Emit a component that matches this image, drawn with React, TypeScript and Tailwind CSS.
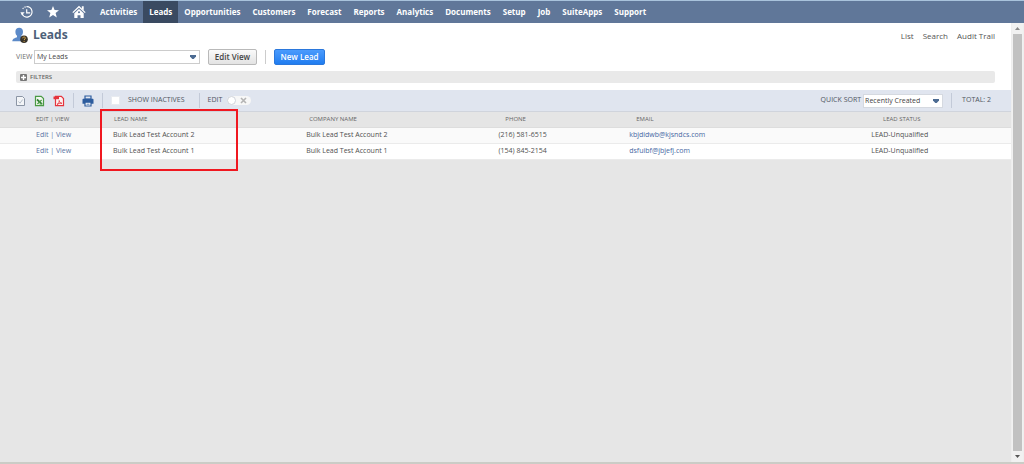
import React from 'react'

interface Lead {
  name: string
  company: string
  phone: string
  email: string
  status: string
}

const navItems = [
  'Activities',
  'Leads',
  'Opportunities',
  'Customers',
  'Forecast',
  'Reports',
  'Analytics',
  'Documents',
  'Setup',
  'Job',
  'SuiteApps',
  'Support',
]

const leads: Lead[] = [
  {
    name: 'Bulk Lead Test Account 2',
    company: 'Bulk Lead Test Account 2',
    phone: '(216) 581-6515',
    email: 'kbjdidwb@kjsndcs.com',
    status: 'LEAD-Unqualified',
  },
  {
    name: 'Bulk Lead Test Account 1',
    company: 'Bulk Lead Test Account 1',
    phone: '(154) 845-2154',
    email: 'dsfuibf@jbjefj.com',
    status: 'LEAD-Unqualified',
  },
]

const RecentIcon = () => (
  <svg viewBox="0 0 14 14" className="h-3.5 w-3.5" fill="none" stroke="currentColor" strokeWidth="1.2">
    <path d="M6.5 1.7A5.2 5.2 0 1 1 2 8.8" />
    <path d="M6.700 4.200v3.600h3.500" />
    <path d="M.4 7.200h4.200L2 10.200z" fill="currentColor" stroke="none" />
    <path d="M5.600 1.900A5.200 5.200 0 0 0 2.200 4.600" strokeDasharray="1.2 1" />
  </svg>
)

const StarIcon = () => (
  <svg viewBox="0 0 14 14" className="h-3.5 w-3.5" fill="currentColor">
    <path d="M7 1l1.600 4.100 4.400.2-3.400 2.800 1.200 4.300L7 10l-3.800 2.400 1.200-4.300L1 5.300l4.400-.2z" />
  </svg>
)

const HomeIcon = () => (
  <svg viewBox="0 0 14 14" className="h-3.5 w-3.5">
    <path d="M9.800 1.300h1.900v4L9.800 3.700z" fill="currentColor" />
    <path d="M.8 7.600L7 1.700l6.200 5.900" fill="none" stroke="currentColor" strokeWidth="1.300" />
    <path
      d="M2.300 8.200L7 3.900l4.700 4.300V13H8.500v-2.800h-3V13H2.300zM7 6.200a1 1 0 1 0 0 2 1 1 0 0 0 0-2z"
      fill="currentColor"
      fillRule="evenodd"
    />
  </svg>
)

const LeadIcon = () => (
  <svg viewBox="0 0 17 17" className="h-[17px] w-[17px]">
    <path
      d="M7.200.8c2.300 0 3.800 1.500 3.800 3.900 0 1.800-.7 3.200-1.700 4v1.500c1.700.8 4.200 1.300 4.200 4.100H.3c0-2.800 2.800-3.300 4.700-4.100V8.700C4 7.900 3.400 6.500 3.400 4.700 3.400 2.300 4.900.8 7.200.8z"
      fill="#5c8ac8"
    />
    <circle cx="12" cy="12.300" r="3.800" fill="#38332a" />
    <path d="M10.700 11.300c0-1.800 2.700-1.700 2.700-.2 0 .9-1.300.9-1.300 1.900" fill="none" stroke="#dba94a" strokeWidth="1" />
    <circle cx="12.100" cy="14.300" r=".6" fill="#dba94a" />
  </svg>
)

const FileIcon = () => (
  <svg viewBox="0 0 11 12" className="h-3 w-[11px]" fill="none" stroke="#8b95a5" strokeWidth="1">
    <path d="M1.500 1.500h6l2 2v7h-8z" fill="#f3f5f8" />
    <path d="M3.500 6.500l1.500 1.700 2.700-3.700" stroke="#b4bdc9" />
  </svg>
)

const ExcelIcon = () => (
  <svg viewBox="0 0 11 12" className="h-3 w-[11px]" fill="none" stroke="#4a9a45" strokeWidth="1.200">
    <path d="M1.500 1.300h5.700l2.300 2.200v7.200h-8z" fill="#f0f7ee" />
    <path d="M3 4.500l4.800 4.300" stroke="#2f7d33" strokeWidth="1.700" />
    <path d="M7.600 5L3.400 9M5.500 9h3" />
  </svg>
)

const PdfIcon = () => (
  <svg viewBox="0 0 12 12" className="h-3 w-3" fill="none" stroke="#e5343d" strokeWidth="1.200">
    <path d="M2.500 4V1.300h5.800l2.200 2.200v7.200h-8V4" fill="#fdf1f1" />
    <path d="M.5 1.500H6v2.700H.5z" fill="#e5343d" stroke="none" />
    <path d="M4 9.500c1.800-1 2.300-2.500 2.200-4 .3 1.800 1 2.600 2.800 2.800-2-.2-3.500.2-5 1.200z" strokeWidth=".9" />
  </svg>
)

const PrintIcon = () => (
  <svg viewBox="0 0 12 12" className="h-3 w-3">
    <path d="M3 1h6v3H3z" fill="#e2e7f1" stroke="#2d5c9e" strokeWidth="1.200" />
    <path d="M1.500 3.700h9c.6 0 1 .4 1 1v4H.5v-4c0-.6.4-1 1-1z" fill="#2d5c9e" />
    <path d="M3 7.200h6V11H3z" fill="#fff" stroke="#2d5c9e" strokeWidth="1.200" />
    <path d="M4.500 9.200h3" stroke="#2d5c9e" strokeWidth=".8" />
  </svg>
)

const Caret = () => (
  <svg viewBox="0 0 8 6" className="pointer-events-none absolute right-[3px] h-1.5 w-2">
    <path d="M1 1h6v1.500L4.700 5H3.300L1 2.500z" fill="#4c6b92" />
  </svg>
)

const Divider = ({ className = '' }: { className?: string }) => (
  <span className={`h-[15px] w-px bg-[#c3cad8] ${className}`} />
)

const NavBar = () => (
  <nav className="flex h-[23px] shrink-0 items-stretch border-t border-[#a9c3dc] bg-[#607799] pl-5 text-white">
    <div className="mr-2 flex items-center gap-3">
      <button aria-label="Recent records"><RecentIcon /></button>
      <button aria-label="Shortcuts"><StarIcon /></button>
      <button aria-label="Home"><HomeIcon /></button>
    </div>
    {navItems.map((item) => (
      <a
        key={item}
        href="#"
        className={`flex items-center px-1.5 text-[8px] font-bold ${item === 'Leads' ? 'bg-[#3a4a61]' : ''}`}
      >
        {item}
      </a>
    ))}
  </nav>
)

const PageHeader = () => (
  <header className="h-[67px] shrink-0 bg-white">
    <div className="flex h-[25px] items-center justify-between pr-4 pl-3">
      <div className="flex items-center gap-1">
        <LeadIcon />
        <h1 className="pb-0.5 text-[12px] leading-4 font-bold text-[#4d5f79]">Leads</h1>
      </div>
      <div className="flex gap-[9px] text-[8px] text-[#545454]">
        <a href="#">List</a>
        <a href="#">Search</a>
        <a href="#">Audit Trail</a>
      </div>
    </div>

    <div className="flex h-[18px] items-center pl-4">
      <label htmlFor="view" className="w-[18px] text-[7px] text-[#6f6f6f]">VIEW</label>
      <div className="relative flex w-[166px] items-center">
        <select
          id="view"
          className="h-3.5 w-full appearance-none border border-[#ccc] bg-white px-0.5 text-[7px] leading-3 text-[#444]"
        >
          <option>My Leads</option>
        </select>
        <Caret />
      </div>
      <button className="ml-2 h-4 w-[49px] rounded-xs border border-[#b9b9b9] bg-linear-to-b from-[#fafafa] to-[#e3e3e3] text-[8px] leading-3 font-semibold text-[#444]">
        Edit View
      </button>
      <span className="mx-2 h-3.5 w-px bg-[#ccc]" />
      <button className="h-4 w-[51px] rounded-xs border border-[#2b78dc] bg-linear-to-b from-[#4a9bfd] to-[#1f7df0] text-[8px] leading-3 font-semibold text-white">
        New Lead
      </button>
    </div>

    <button className="mt-[5px] mr-4 ml-4 flex h-3 w-[calc(100%-32px)] items-center gap-[3px] rounded-xs bg-[#e9e9e9] pl-1 text-[6px] font-semibold text-[#666]">
      <svg viewBox="0 0 7 7" className="h-[7px] w-[7px]">
        <rect width="7" height="7" rx="1" fill="#777" />
        <path d="M3.500 1v5M1 3.500h5" stroke="#fff" strokeWidth="1.400" />
      </svg>
      FILTERS
    </button>
  </header>
)

const Toolbar = () => (
  <div className="flex h-[22px] shrink-0 items-center border-b border-[#d0d4dc] bg-[#e0e5ef] pr-5 pl-[15px] text-[7px] text-[#4f5661]">
    <div className="flex items-center gap-2">
      <button aria-label="Export CSV"><FileIcon /></button>
      <button aria-label="Export Excel"><ExcelIcon /></button>
      <button aria-label="Export PDF"><PdfIcon /></button>
    </div>
    <Divider className="mx-2" />
    <button aria-label="Print"><PrintIcon /></button>
    <Divider className="mx-2" />
    <label className="flex items-center gap-2">
      <input type="checkbox" className="h-[9px] w-[9px] appearance-none border border-[#e8ebf0] bg-white" />
      SHOW INACTIVES
    </label>
    <Divider className="mr-2 ml-3.5" />
    <label className="relative flex items-center gap-[5px]">
      EDIT
      <input type="checkbox" className="sr-only" />
      <span className="flex h-[9px] w-6 items-center justify-between rounded-full bg-[#f7f7f7] pr-1">
        <span className="h-[9px] w-[9px] rounded-full border border-[#cfd3da] bg-white" />
        <svg viewBox="0 0 7 7" className="h-[7px] w-[7px]">
          <path d="M1 1l5 5M6 1L1 6" stroke="#b4b4b4" strokeWidth="1.600" />
        </svg>
      </span>
    </label>

    <label htmlFor="sort" className="mr-0.5 ml-auto">QUICK SORT</label>
    <div className="relative flex w-20 items-center">
      <select
        id="sort"
        className="h-3.5 w-full appearance-none border border-[#d5d9e0] bg-white px-px text-[7px] leading-3 text-[#444]"
      >
        <option>Recently Created</option>
      </select>
      <Caret />
    </div>
    <Divider className="mr-2.5 ml-2" />
    <span>TOTAL: 2</span>
  </div>
)

const LeadsTable = () => (
  <div className="relative">
    <table className="w-full table-fixed text-left text-[7px] leading-3 text-[#505050]">
      <colgroup>
        <col className="w-[10%]" />
        <col className="w-[19%]" />
        <col className="w-[17%]" />
        <col className="w-[11%]" />
        <col className="w-[21%]" />
        <col className="w-[22%]" />
      </colgroup>
      <thead className="bg-[#e5e5e5] text-[6px] text-[#666]">
        <tr className="h-[15px] border-b border-[#ddd]">
          <th className="pl-9 font-normal">EDIT | VIEW</th>
          <th className="pl-[13px] font-normal">LEAD NAME</th>
          <th className="pl-4 font-normal">COMPANY NAME</th>
          <th className="pr-2.5 text-center font-normal">PHONE</th>
          <th className="pl-[60px] font-normal">EMAIL</th>
          <th className="pl-1 text-center font-normal">LEAD STATUS</th>
        </tr>
      </thead>
      <tbody>
        {leads.map((lead) => (
          <tr key={lead.name} className="h-4 border-b border-[#ebebeb] odd:bg-[#fafafa] even:bg-white">
            <td className="pl-9 text-[#5a74a3]">
              <a href="#">Edit</a> | <a href="#">View</a>
            </td>
            <td className="pl-3">{lead.name}</td>
            <td className="pl-[13px]">{lead.company}</td>
            <td className="pl-1 text-center">{lead.phone}</td>
            <td className="pl-[53px]">
              <a href="#" className="text-[#4668a3]">{lead.email}</a>
            </td>
            <td className="text-center">{lead.status}</td>
          </tr>
        ))}
      </tbody>
    </table>
    {/* Callout around the lead name column */}
    <div className="pointer-events-none absolute -top-[3px] left-[100px] h-[62px] w-[138px] border-2 border-[#f01820]" />
  </div>
)

const ScrollBar = () => (
  <div className="flex w-[13px] shrink-0 flex-col items-center border-x border-[#eee] bg-[#f1f1f1]">
    <svg viewBox="0 0 11 11" className="h-[11px] w-[11px]">
      <path d="M3 7h5L5.500 4z" fill="#888" />
    </svg>
    <div className="w-[9px] flex-1 bg-[#c1c1c1]" />
    <svg viewBox="0 0 11 11" className="h-[11px] w-[11px]">
      <path d="M3 4h5L5.500 7z" fill="#555" />
    </svg>
  </div>
)

export default function App() {
  return (
    <div className="flex min-h-screen flex-col bg-[#e6e6e6] font-['Open_Sans',sans-serif]">
      <NavBar />
      <div className="flex flex-1 border-b-2 border-[#cbccc6]">
        <main className="flex min-w-0 flex-1 flex-col">
          <PageHeader />
          <Toolbar />
          <LeadsTable />
        </main>
        <ScrollBar />
      </div>
    </div>
  )
}
